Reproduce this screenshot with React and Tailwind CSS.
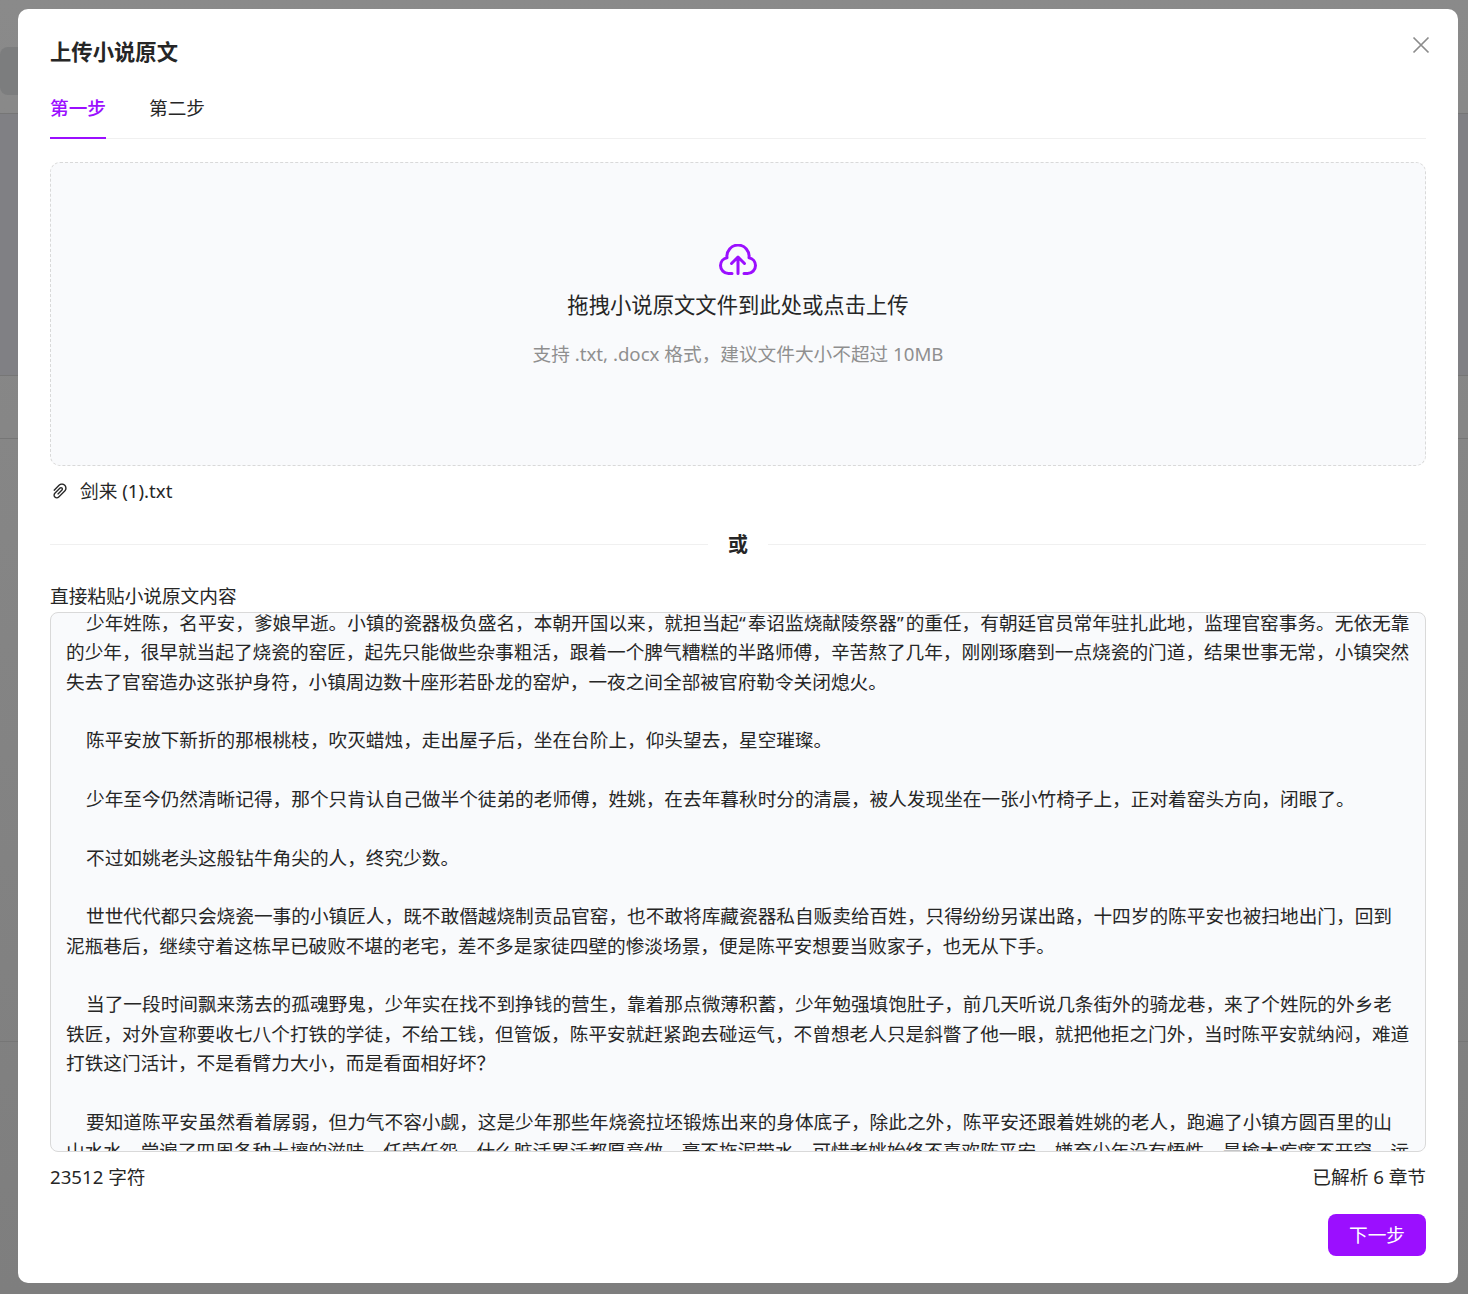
import React from 'react';
import { AiOutlinePaperClip } from 'react-icons/ai';

const FONT = "font-['Noto_Sans','Noto_Sans_CJK_SC',sans-serif]";

const paragraphs = [
  <>少年姓陈，名平安，爹娘早逝。小镇的瓷器极负盛名，本朝开国以来，就担当起<span className="tracking-[2px]">“</span>奉诏监烧献陵祭器<span className="tracking-[2px]">”</span>的重任，有朝廷官员常年驻扎此地，监理官窑事务。无依无靠的少年，很早就当起了烧瓷的窑匠，起先只能做些杂事粗活，跟着一个脾气糟糕的半路师傅，辛苦熬了几年，刚刚琢磨到一点烧瓷的门道，结果世事无常，小镇突然失去了官窑造办这张护身符，小镇周边数十座形若卧龙的窑炉，一夜之间全部被官府勒令关闭熄火。</>,
  '陈平安放下新折的那根桃枝，吹灭蜡烛，走出屋子后，坐在台阶上，仰头望去，星空璀璨。',
  '少年至今仍然清晰记得，那个只肯认自己做半个徒弟的老师傅，姓姚，在去年暮秋时分的清晨，被人发现坐在一张小竹椅子上，正对着窑头方向，闭眼了。',
  '不过如姚老头这般钻牛角尖的人，终究少数。',
  '世世代代都只会烧瓷一事的小镇匠人，既不敢僭越烧制贡品官窑，也不敢将库藏瓷器私自贩卖给百姓，只得纷纷另谋出路，十四岁的陈平安也被扫地出门，回到泥瓶巷后，继续守着这栋早已破败不堪的老宅，差不多是家徒四壁的惨淡场景，便是陈平安想要当败家子，也无从下手。',
  '当了一段时间飘来荡去的孤魂野鬼，少年实在找不到挣钱的营生，靠着那点微薄积蓄，少年勉强填饱肚子，前几天听说几条街外的骑龙巷，来了个姓阮的外乡老铁匠，对外宣称要收七八个打铁的学徒，不给工钱，但管饭，陈平安就赶紧跑去碰运气，不曾想老人只是斜瞥了他一眼，就把他拒之门外，当时陈平安就纳闷，难道打铁这门活计，不是看臂力大小，而是看面相好坏？',
  '要知道陈平安虽然看着孱弱，但力气不容小觑，这是少年那些年烧瓷拉坯锻炼出来的身体底子，除此之外，陈平安还跟着姓姚的老人，跑遍了小镇方圆百里的山山水水，尝遍了四周各种土壤的滋味，任劳任怨，什么脏活累活都愿意做，毫不拖泥带水。可惜老姚始终不喜欢陈平安，嫌弃少年没有悟性，是榆木疙瘩不开窍，远',
];

function UploadCloud() {
  return (
    <svg width="38" height="31" viewBox="0 0 38 31" fill="none" stroke="#9b0fff" strokeWidth="3" strokeLinecap="round" strokeLinejoin="round">
      <path d="M13 29.500H9.500A8 8 0 0 1 1.500 21.500 8 8 0 0 1 8 13.700 11.100 11.100 0 1 1 30 13.700 8 8 0 0 1 36.500 21.500 8 8 0 0 1 28.500 29.500H25" />
      <path d="M19 29.500V13.500M12.500 19.500L19 13l6.500 6.500" />
    </svg>
  );
}

export default function App() {
  return (
    <div className={`relative h-[1294px] w-full overflow-hidden bg-gradient-to-b from-[#8a8a8a] to-[#7e7e7e] ${FONT}`}>
      {/* page behind the mask */}
      <div className="absolute left-0 top-[47px] h-[48px] w-[18px] rounded-l-lg bg-[#7c7d7e]" />
      <div className="absolute inset-x-0 top-[113px] h-[263px] border-y border-[#767676] bg-[#808084]" />
      <div className="absolute inset-x-0 top-[438px] h-px bg-[#767676]" />
      <div className="absolute inset-x-0 top-[1041px] h-px bg-[#767676]" />

      <div className="absolute left-[18px] top-[9px] flex h-[1274px] w-[1440px] flex-col rounded-[10px] bg-white px-8 pt-[27px] text-[18.67px] leading-[29.33px] text-[#262626]">
        <button className="absolute right-[27px] top-[26px] text-[#8c8c8c]">
          <svg width="20" height="20" viewBox="0 0 20 20" fill="none" stroke="currentColor" strokeWidth="1.700">
            <path d="M2.500 2.500l15 15M17.500 2.500l-15 15" />
          </svg>
        </button>

        <h2 className="text-[21.33px] font-semibold leading-[32px]">上传小说原文</h2>

        <div className="mt-[23px] flex h-[48px] gap-[43px] border-b border-[#f0f0f0]">
          <div className="relative h-[47px] w-[56px] pt-[2px] font-medium text-[#9b0fff]">
            第一步
            <span className="absolute inset-x-0 bottom-[-1px] h-[2px] bg-[#9b0fff]" />
          </div>
          <div className="pt-[2px]">第二步</div>
        </div>

        <div className="mt-[23px] flex h-[304px] flex-col items-center rounded-[10px] border border-dashed border-[#d9d9d9] bg-[#f9fafc] pt-[81px]">
          <UploadCloud />
          <p className="mt-[14px] text-[21.33px] leading-[32px]">拖拽小说原文文件到此处或点击上传</p>
          <p className="mt-[18px] text-[#8f8f8f]">支持 .txt, .docx 格式，建议文件大小不超过 10MB</p>
        </div>

        <div className="mt-[10px] flex items-center gap-[10px]">
          <AiOutlinePaperClip className="size-[20px]" />
          <span>剑来 (1).txt</span>
        </div>

        <div className="mt-[25px] flex items-center gap-[20px]">
          <div className="h-px flex-1 bg-[#f0f0f0]" />
          <span className="text-[20px] font-semibold">或</span>
          <div className="h-px flex-1 bg-[#f0f0f0]" />
        </div>

        <label className="mt-[22px] block -translate-y-px">直接粘贴小说原文内容</label>
        <div className="mt-[1px] h-[540px] overflow-hidden rounded-[8px] border border-[#d9d9d9] bg-[#f9fafc] px-[15px]">
          {paragraphs.map((text, i) => (
            <p key={i} className="mb-[29.33px] -translate-y-[5.4px] indent-[20px]">{text}</p>
          ))}
        </div>

        <div className="mt-[11px] flex -translate-y-px justify-between">
          <span>23512 字符</span>
          <span>已解析 6 章节</span>
        </div>

        <div className="mt-[22px] flex justify-end">
          <button className="h-[42px] w-[98px] rounded-[8px] bg-[#9b0fff] pb-[2px] text-white">下一步</button>
        </div>
      </div>
    </div>
  );
}
